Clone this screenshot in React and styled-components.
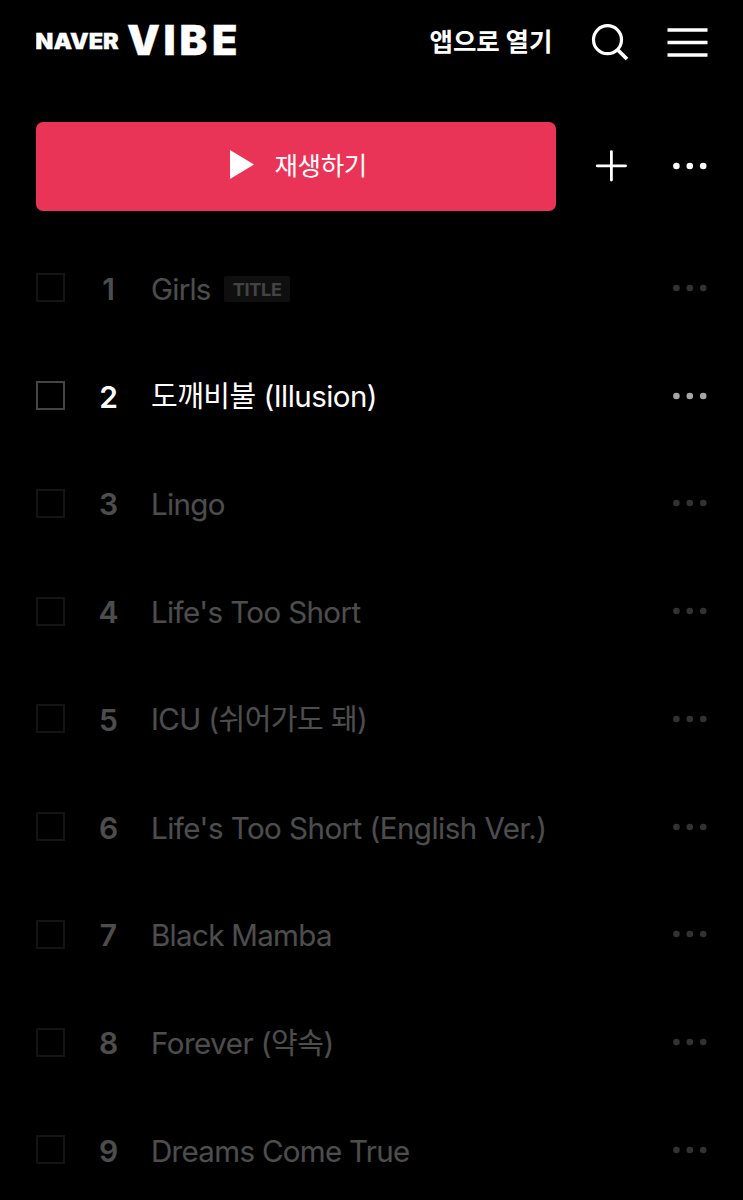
import React, { useState } from 'react'
import styled, { createGlobalStyle } from 'styled-components'

const GlobalStyle = createGlobalStyle`
    * {
        box-sizing: border-box;
    }
    body {
        margin: 0;
        background-color: #000;
        overflow: hidden;
    }
`
const StyledPage = styled.div`
    width: 743px;
    height: 1200px;
    overflow: hidden;
    background-color: #000;
    color: #fff;
    font-family: "Inter", "Noto Sans CJK KR", sans-serif;
    button {
        display: block;
        padding: 0;
        border: 0;
        background: none;
        color: inherit;
        font-family: inherit;
    }
    svg {
        display: block;
    }
`
const StyledHeader = styled.header`
    display: flex;
    align-items: center;
    height: 84px;
    padding: 0 35px 0 36px;
`
const StyledLogo = styled.svg`
    width: 204px;
    height: 84px;
    fill: #fff;
`
const StyledOpenApp = styled.button`
    && {
        width: 124px;
        margin: 0 38px 0 auto;
        padding-bottom: 4px;
        font-size: 25.5px;
        line-height: 36px;
        font-weight: 700;
        font-family: "Noto Sans CJK KR", sans-serif;
        white-space: nowrap;
    }
`
const StyledMenuButton = styled.button`
    && {
        margin-left: 38px;
    }
`
const StyledActions = styled.div`
    display: flex;
    align-items: center;
    height: 89.5px;
    margin-top: 37.5px;
    padding: 0 35px 0 36px;
`
const StyledPlayButton = styled.button`
    && {
        display: flex;
        align-items: center;
        justify-content: center;
        gap: 20px;
        width: 520.4px;
        height: 89.5px;
        padding: 0 0 4px 5px;
        border-radius: 7px;
        background-color: #e93457;
        font-size: 25.5px;
        line-height: 36px;
        font-family: "Noto Sans CJK KR", sans-serif;
        letter-spacing: -0.3px;
    }
`
const StyledAddButton = styled.button`
    && {
        margin: 0 auto 0 38px;
    }
`
const StyledTrackList = styled.ul`
    list-style: none;
    margin: 23px 0 0;
    padding: 0 35px 0 36px;
`
const StyledTrack = styled.li`
    display: flex;
    align-items: center;
    height: 107.75px;
    opacity: ${props => props.$active ? 1 : 0.3};
`
const StyledCheckbox = styled.button`
    && {
        width: 29px;
        height: 29px;
        border: 2px solid ${props => props.$checked ? '#e93457' : '#444'};
    }
`
const StyledRank = styled.div`
    width: 87px;
    padding-top: 2px;
    text-align: center;
    font-size: 30px;
    line-height: 40px;
    font-weight: 600;
`
const StyledTitle = styled.div`
    flex: 1;
    display: flex;
    align-items: center;
    margin-left: -1px;
    padding-top: 2px;
    font-size: 29.5px;
    line-height: 40px;
    white-space: pre;
    letter-spacing: ${props => props.$spacing}px;
`
const StyledHangul = styled.span`
    font-size: 29px;
    letter-spacing: -0.5px;
`
const StyledBadge = styled.span`
    margin-left: 13.5px;
    width: 66px;
    height: 26px;
    border-radius: 2px;
    background-color: #333;
    color: #ddd;
    font-size: 18px;
    line-height: 27px;
    font-weight: 700;
    text-align: center;
    letter-spacing: -0.3px;
`
const StyledDots = styled.svg`
    width: 35px;
    height: 8px;
    fill: ${props => props.$color};
`

const TRACKS = [
    { rank: 1, title: 'Girls', spacing: -0.75, isTitle: true },
    { rank: 2, title: '도깨비불 (Illusion)', spacing: -0.55, active: true },
    { rank: 3, title: 'Lingo', spacing: -0.65 },
    { rank: 4, title: "Life's Too Short", spacing: -0.6 },
    { rank: 5, title: 'ICU (쉬어가도 돼)', spacing: -0.6 },
    { rank: 6, title: "Life's Too Short (English Ver.)", spacing: -0.52 },
    { rank: 7, title: 'Black Mamba', spacing: -0.68 },
    { rank: 8, title: 'Forever (약속)', spacing: -0.5 },
    { rank: 9, title: 'Dreams Come True', spacing: -0.68 },
]

const Dots = ({ color }) => (
    <StyledDots viewBox="0 0 35 8" $color={color}>
        <circle cx="3.4" cy="4" r="3.3" />
        <circle cx="16.8" cy="4" r="3.3" />
        <circle cx="30.2" cy="4" r="3.3" />
    </StyledDots>
)

const Logo = () => (
    <StyledLogo viewBox="0 0 204 84" role="img" aria-label="NAVER VIBE">
        <text x="-0.7" y="48.7" fontSize="21" fontWeight="900" stroke="#fff" strokeWidth="0.3" textLength="83.5" lengthAdjust="spacingAndGlyphs">NAVER</text>
        <text x="91 127.5 143.5 176" y="55.3" fontSize="41.5" fontWeight="900" stroke="#fff" strokeWidth="0.3">VIBE</text>
    </StyledLogo>
)

const Track = ({ track }) => {
    const [checked, setChecked] = useState(false)
    const parts = track.title.split(/([가-힣]+)/)

    return (
        <StyledTrack $active={track.active}>
            <StyledCheckbox $checked={checked} aria-label="선택" onClick={() => setChecked(!checked)} />
            <StyledRank>{track.rank}</StyledRank>
            <StyledTitle $spacing={track.spacing}>
                <span>
                    {parts.map((part, i) => i % 2 ? <StyledHangul key={i}>{part}</StyledHangul> : part)}
                </span>
                {track.isTitle && <StyledBadge>TITLE</StyledBadge>}
            </StyledTitle>
            <button aria-label="더보기"><Dots color="#a6a6a6" /></button>
        </StyledTrack>
    )
}

const App = () => (
    <StyledPage>
        <GlobalStyle />
        <StyledHeader>
            <Logo />
            <StyledOpenApp>앱으로 열기</StyledOpenApp>
            <button aria-label="검색">
                <svg width="38" height="38" viewBox="0 0 38 38" fill="none" stroke="#fff" strokeWidth="3.2">
                    <circle cx="16.5" cy="16.7" r="14" />
                    <path d="M26.3 26.5 L36 36" strokeWidth="3.8" />
                </svg>
            </button>
            <StyledMenuButton aria-label="메뉴">
                <svg width="41" height="30" viewBox="0 0 41 30" stroke="#fff" strokeWidth="3.3">
                    <path d="M0.5 3 H40.5 M0.5 15.5 H40.5 M0.5 28 H40.5" />
                </svg>
            </StyledMenuButton>
        </StyledHeader>
        <StyledActions>
            <StyledPlayButton>
                <svg width="24" height="29" viewBox="0 0 24 29" fill="#fff">
                    <path d="M0 0 L24 14.5 L0 29 Z" />
                </svg>
                재생하기
            </StyledPlayButton>
            <StyledAddButton aria-label="추가">
                <svg width="34" height="34" viewBox="0 0 34 34" stroke="#fff" strokeWidth="2.8" strokeLinecap="round">
                    <path d="M17.4 2.6 V31 M3.2 16.8 H31.6" />
                </svg>
            </StyledAddButton>
            <button aria-label="더보기"><Dots color="#fff" /></button>
        </StyledActions>
        <StyledTrackList>
            {TRACKS.map(track => <Track key={track.rank} track={track} />)}
        </StyledTrackList>
    </StyledPage>
)

export default App
